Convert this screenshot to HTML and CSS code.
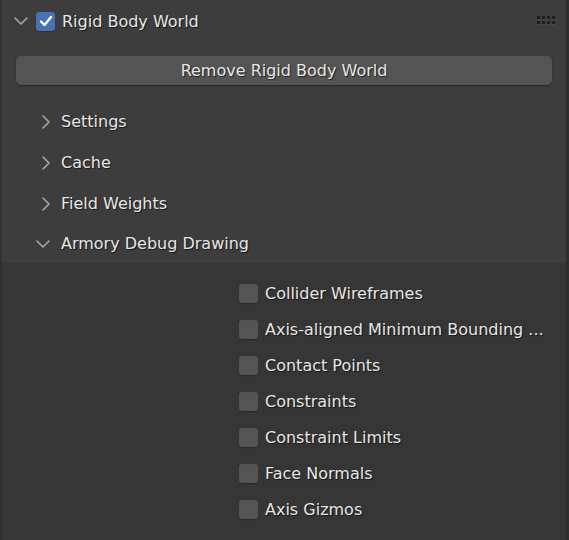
FILE: index.html
```html
<!DOCTYPE html>
<html>
<head>
<meta charset="utf-8">
<link rel="stylesheet" href="styles.css">
</head>
<body>
<div class="panel">
  <div class="top">
    <div class="header">
      <svg class="chev" width="14" height="8" viewBox="0 0 14 8"><path d="M1 1 L7 7 L13 1" fill="none" stroke="#a6a6a6" stroke-width="1.6" stroke-linecap="round" stroke-linejoin="round"/></svg>
      <span class="check on"><svg width="14" height="12" viewBox="0 0 14 12"><path d="M2 6.5 L5.5 10 L12 2" fill="none" stroke="#fff" stroke-width="2.4" stroke-linecap="round" stroke-linejoin="round"/></svg></span>
      <span class="title">Rigid Body World</span>
      <span class="grip"><i></i><i></i><i></i><i></i><i></i><i></i><i></i><i></i></span>
    </div>
    <div class="btnrow"><div class="btn">Remove Rigid Body World</div></div>
    <div class="sub">
      <svg class="chev-r" width="8" height="14" viewBox="0 0 8 14"><path d="M1 1 L7 7 L1 13" fill="none" stroke="#a6a6a6" stroke-width="1.6" stroke-linecap="round" stroke-linejoin="round"/></svg>
      <span>Settings</span>
    </div>
    <div class="sub">
      <svg class="chev-r" width="8" height="14" viewBox="0 0 8 14"><path d="M1 1 L7 7 L1 13" fill="none" stroke="#a6a6a6" stroke-width="1.6" stroke-linecap="round" stroke-linejoin="round"/></svg>
      <span>Cache</span>
    </div>
    <div class="sub">
      <svg class="chev-r" width="8" height="14" viewBox="0 0 8 14"><path d="M1 1 L7 7 L1 13" fill="none" stroke="#a6a6a6" stroke-width="1.6" stroke-linecap="round" stroke-linejoin="round"/></svg>
      <span>Field Weights</span>
    </div>
    <div class="sub open">
      <svg class="chev-d" width="14" height="8" viewBox="0 0 14 8"><path d="M1 1 L7 7 L13 1" fill="none" stroke="#a6a6a6" stroke-width="1.6" stroke-linecap="round" stroke-linejoin="round"/></svg>
      <span>Armory Debug Drawing</span>
    </div>
  </div>
  <div class="body">
    <div class="opt"><span class="check"></span><span class="lbl">Collider Wireframes</span></div>
    <div class="opt"><span class="check"></span><span class="lbl">Axis-aligned Minimum Bounding ...</span></div>
    <div class="opt"><span class="check"></span><span class="lbl">Contact Points</span></div>
    <div class="opt"><span class="check"></span><span class="lbl">Constraints</span></div>
    <div class="opt"><span class="check"></span><span class="lbl">Constraint Limits</span></div>
    <div class="opt"><span class="check"></span><span class="lbl">Face Normals</span></div>
    <div class="opt"><span class="check"></span><span class="lbl">Axis Gizmos</span></div>
  </div>
</div>
</body>
</html>
```

FILE: styles.css
```css
html, body {
  margin: 0;
  padding: 0;
  background: #363636;
}
body {
  width: 569px;
  height: 540px;
  overflow: hidden;
  font-family: "DejaVu Sans", sans-serif;
  font-size: 16px;
  color: #e6e6e6;
}
.panel {
  height: 540px;
  display: flex;
  flex-direction: column;
  border-left: 2px solid #303030;
  border-right: 3px solid #2e2e2e;
}
.top {
  background: #3d3d3d;
}
.header {
  height: 42px;
  display: flex;
  align-items: center;
  position: relative;
}
.chev {
  margin-left: 12px;
  margin-right: 8px;
}
.check {
  width: 19px;
  height: 19px;
  border-radius: 3px;
  background: #545454;
  display: inline-flex;
  align-items: center;
  justify-content: center;
  box-shadow: 0 1px 1px rgba(0,0,0,0.25);
  flex: none;
}
.check.on {
  background: #4772b3;
}
.title {
  margin-left: 7px;
  text-shadow: 1px 1px 1px rgba(0,0,0,0.6);
}
.grip {
  position: absolute;
  right: 10px;
  top: 16px;
  width: 19px;
  display: grid;
  grid-template-columns: repeat(4, 3px);
  gap: 2px 2px;
}
.grip i {
  width: 3px;
  height: 3px;
  background: #1e1e1e;
  box-shadow: 0 1px 0 #4a4a4a;
}
.btnrow {
  padding: 14px 14px 0 14px;
}
.btn {
  height: 29px;
  border-radius: 5px;
  background: #545454;
  display: flex;
  align-items: center;
  justify-content: center;
  box-shadow: 0 1px 2px rgba(0,0,0,0.35);
  text-shadow: 1px 1px 1px rgba(0,0,0,0.6);
}
.sub {
  height: 41px;
  display: flex;
  align-items: center;
  text-shadow: 1px 1px 1px rgba(0,0,0,0.6);
}
.btnrow + .sub {
  margin-top: 16px;
}
.sub.open {
  height: 39px;
}
.chev-r {
  margin-left: 40px;
  margin-right: 11px;
}
.chev-d {
  margin-left: 34px;
  margin-right: 11px;
}
.body {
  flex: 1;
  background: #363636;
  padding-top: 12px;
  padding-left: 237px;
}
.opt {
  height: 36px;
  display: flex;
  align-items: center;
}
.opt .lbl {
  margin-left: 7px;
  text-shadow: 1px 1px 1px rgba(0,0,0,0.6);
  white-space: nowrap;
}
```
